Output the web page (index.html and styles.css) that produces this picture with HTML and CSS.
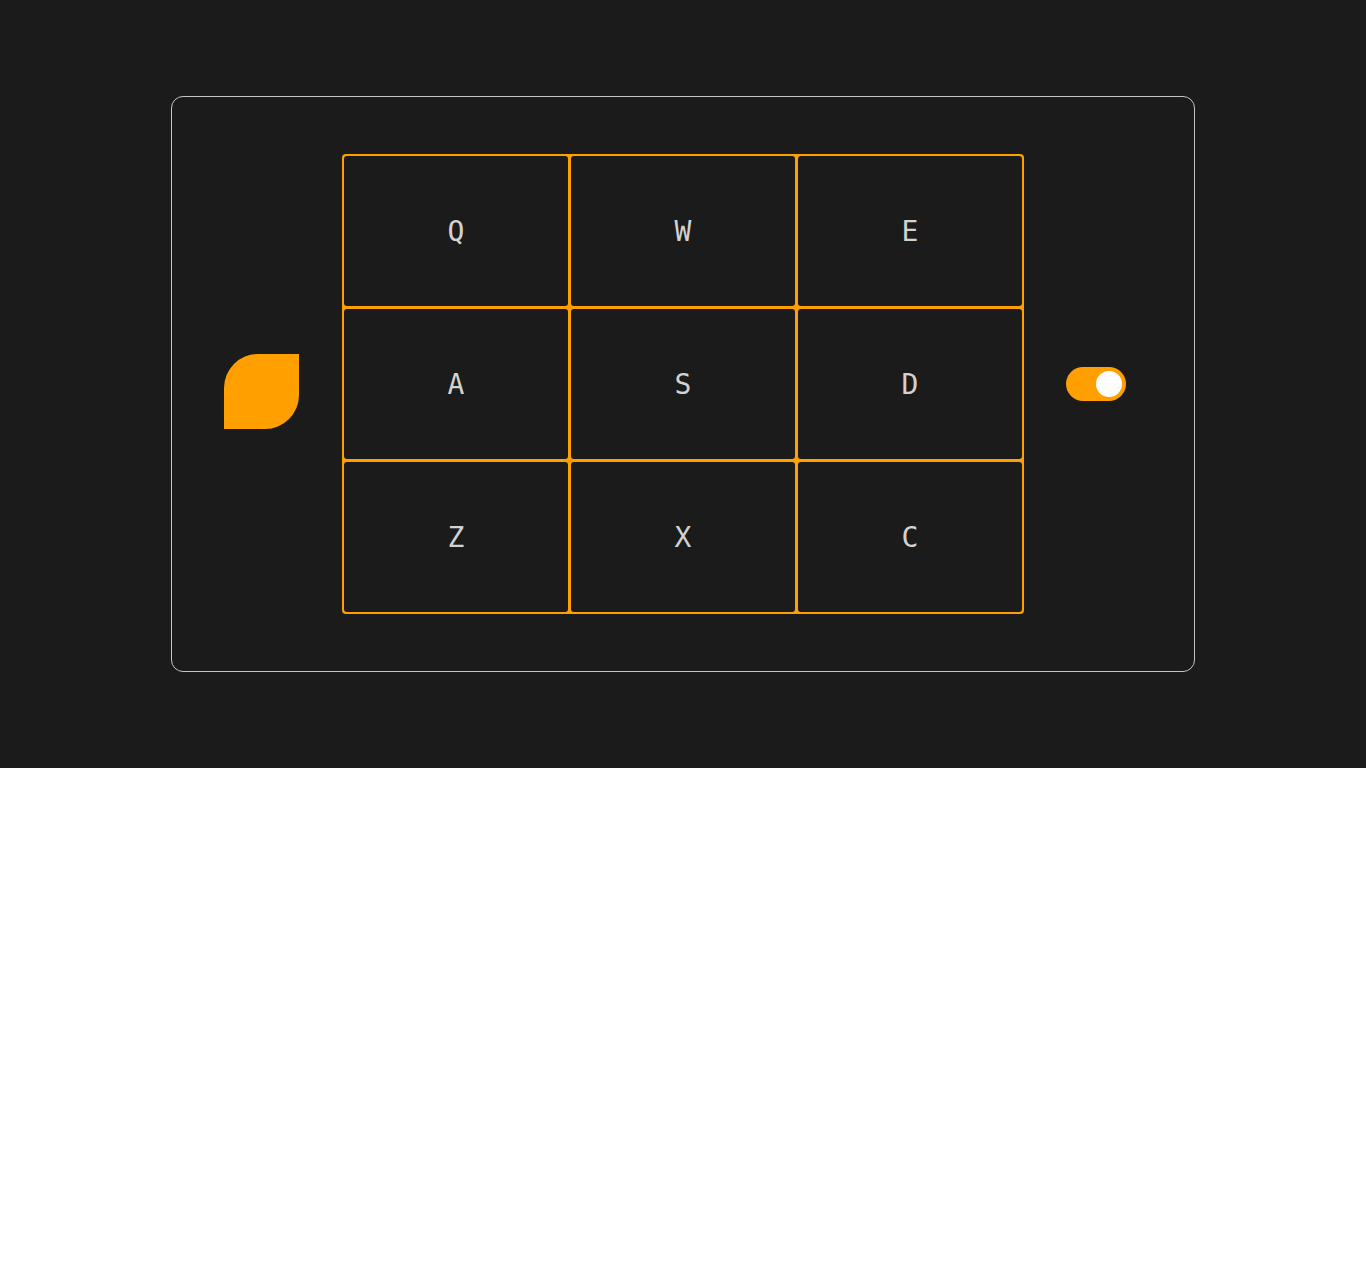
FILE: index.html
```html
<!DOCTYPE html>
<html lang="en">
<head>
<meta charset="utf-8">
<title>Keypad</title>
<link rel="stylesheet" href="styles.css">
</head>
<body>
<section class="stage">
  <div class="card">
    <div class="leaf"></div>
    <div class="keys">
      <div class="key">Q</div>
      <div class="key">W</div>
      <div class="key">E</div>
      <div class="key">A</div>
      <div class="key">S</div>
      <div class="key">D</div>
      <div class="key">Z</div>
      <div class="key">X</div>
      <div class="key">C</div>
    </div>
    <label class="toggle">
      <span class="knob"></span>
    </label>
  </div>
</section>
</body>
</html>
```
FILE: styles.css
```css
html, body {
  margin: 0;
  padding: 0;
  background: #ffffff;
}

.stage {
  height: 768px;
  background: #1b1b1b;
  display: flex;
  align-items: center;
  justify-content: center;
}

.card {
  box-sizing: border-box;
  width: 1024px;
  height: 576px;
  border: 1px solid #c4c4c4;
  border-radius: 12px;
  display: flex;
  align-items: center;
  padding-left: 52px;
}

.leaf {
  width: 75px;
  height: 75px;
  background: #ffa000;
  border-radius: 34px 0 34px 0;
  margin-top: 15px;
  margin-right: 43px;
  flex: none;
}

.keys {
  padding: 2px;
  background: #ffa000;
  border-radius: 4px;
  display: grid;
  grid-template-columns: repeat(3, 224px);
  grid-template-rows: repeat(3, 150px);
  gap: 3px;
  flex: none;
  margin-top: -1px;
}

.key {
  box-sizing: border-box;
  padding-top: 2px;
  background: #1b1b1b;
  border-radius: 3px;
  display: flex;
  align-items: center;
  justify-content: center;
  font-family: "DejaVu Sans Mono", "Liberation Mono", monospace;
  font-size: 28px;
  color: #d2d2d2;
}

.toggle {
  position: relative;
  width: 60px;
  height: 34px;
  border-radius: 17px;
  background: #ffa000;
  margin-left: 42px;
  flex: none;
}

.knob {
  position: absolute;
  top: 4px;
  left: 30px;
  width: 26px;
  height: 26px;
  border-radius: 50%;
  background: #ffffff;
}
```
